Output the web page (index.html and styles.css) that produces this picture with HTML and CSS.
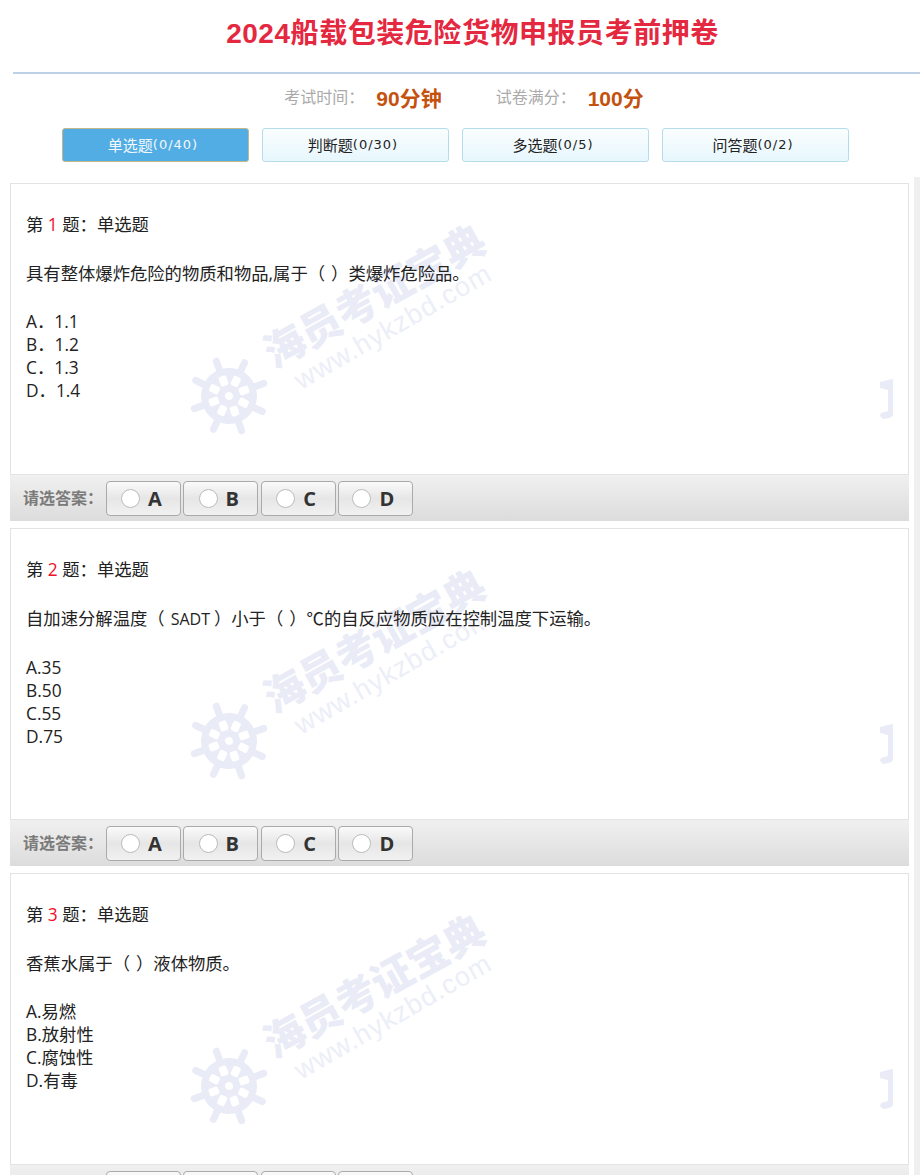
FILE: index.html
```html
<!DOCTYPE html>
<html lang="zh-CN">
<head>
<meta charset="utf-8">
<title>2024船载包装危险货物申报员考前押卷</title>
<link rel="stylesheet" href="styles.css">
</head>
<body>
<header class="head"><h1 class="title">2024船载包装危险货物申报员考前押卷</h1></header>
<div class="info">
  <span class="info-item"><span class="info-label">考试时间：</span><b class="info-value">90分钟</b></span>
  <span class="info-item"><span class="info-label">试卷满分：</span><b class="info-value">100分</b></span>
</div>
<nav class="tabs">
  <a class="tab active">单选题<span class="tab-num">(0/40)</span></a>
  <a class="tab">判断题<span class="tab-num">(0/30)</span></a>
  <a class="tab">多选题<span class="tab-num">(0/5)</span></a>
  <a class="tab">问答题<span class="tab-num">(0/2)</span></a>
</nav>
<div class="main">
  <div class="list">
    <section class="card">
      <svg class="mark" viewBox="0 0 899 338" width="899" height="338" aria-hidden="true">
        <text class="mark-cn" transform="translate(264 186) rotate(-29)">海员考证宝典</text>
        <text class="mark-en" transform="translate(291 207) rotate(-30)">www.hykzbd.com</text>
        <g transform="translate(219 213) rotate(-20)">
          <g class="spokes"><path d="M0-37V37M-37 0H37M-26-26L26 26M-26 26L26-26"/></g>
          <circle class="disc" r="28"/>
          <g class="holes">
            <rect x="-4" y="-21" width="8" height="10" rx="2"/>
            <rect x="-4" y="11" width="8" height="10" rx="2"/>
            <rect x="-21" y="-4" width="10" height="8" rx="2"/>
            <rect x="11" y="-4" width="10" height="8" rx="2"/>
            <rect x="-4" y="-21" width="8" height="10" rx="2" transform="rotate(45)"/>
            <rect x="-4" y="11" width="8" height="10" rx="2" transform="rotate(45)"/>
            <rect x="-21" y="-4" width="10" height="8" rx="2" transform="rotate(45)"/>
            <rect x="11" y="-4" width="10" height="8" rx="2" transform="rotate(45)"/>
            <circle r="4"/>
          </g>
        </g>
        <path class="disc" d="M878 197l5-1v36q-1 3-10 4l-3-3 1-3 7-2v-21l-8-2v-6z"/>
      </svg>
      <div class="body">
        <p class="q-head">第 <span class="num">1</span> 题：单选题</p>
        <p class="q-text">具有整体爆炸危险的物质和物品,属于（ ）类爆炸危险品。</p>
        <p class="opts">A．1.1<br>B．1.2<br>C．1.3<br>D．1.4</p>
      </div>
      <div class="answer">
        <span class="answer-label">请选答案：</span>
        <div class="choices">
          <label class="choice"><i class="radio"></i>A</label>
          <label class="choice"><i class="radio"></i>B</label>
          <label class="choice"><i class="radio"></i>C</label>
          <label class="choice"><i class="radio"></i>D</label>
        </div>
      </div>
    </section>
    <section class="card">
      <svg class="mark" viewBox="0 0 899 338" width="899" height="338" aria-hidden="true">
        <text class="mark-cn" transform="translate(264 186) rotate(-29)">海员考证宝典</text>
        <text class="mark-en" transform="translate(291 207) rotate(-30)">www.hykzbd.com</text>
        <g transform="translate(219 213) rotate(-20)">
          <g class="spokes"><path d="M0-37V37M-37 0H37M-26-26L26 26M-26 26L26-26"/></g>
          <circle class="disc" r="28"/>
          <g class="holes">
            <rect x="-4" y="-21" width="8" height="10" rx="2"/>
            <rect x="-4" y="11" width="8" height="10" rx="2"/>
            <rect x="-21" y="-4" width="10" height="8" rx="2"/>
            <rect x="11" y="-4" width="10" height="8" rx="2"/>
            <rect x="-4" y="-21" width="8" height="10" rx="2" transform="rotate(45)"/>
            <rect x="-4" y="11" width="8" height="10" rx="2" transform="rotate(45)"/>
            <rect x="-21" y="-4" width="10" height="8" rx="2" transform="rotate(45)"/>
            <rect x="11" y="-4" width="10" height="8" rx="2" transform="rotate(45)"/>
            <circle r="4"/>
          </g>
        </g>
        <path class="disc" d="M878 197l5-1v36q-1 3-10 4l-3-3 1-3 7-2v-21l-8-2v-6z"/>
      </svg>
      <div class="body">
        <p class="q-head">第 <span class="num">2</span> 题：单选题</p>
        <p class="q-text">自加速分解温度（<span class="abbr">SADT</span>）小于（ ）℃的自反应物质应在控制温度下运输。</p>
        <p class="opts">A.35<br>B.50<br>C.55<br>D.75</p>
      </div>
      <div class="answer">
        <span class="answer-label">请选答案：</span>
        <div class="choices">
          <label class="choice"><i class="radio"></i>A</label>
          <label class="choice"><i class="radio"></i>B</label>
          <label class="choice"><i class="radio"></i>C</label>
          <label class="choice"><i class="radio"></i>D</label>
        </div>
      </div>
    </section>
    <section class="card">
      <svg class="mark" viewBox="0 0 899 338" width="899" height="338" aria-hidden="true">
        <text class="mark-cn" transform="translate(264 186) rotate(-29)">海员考证宝典</text>
        <text class="mark-en" transform="translate(291 207) rotate(-30)">www.hykzbd.com</text>
        <g transform="translate(219 213) rotate(-20)">
          <g class="spokes"><path d="M0-37V37M-37 0H37M-26-26L26 26M-26 26L26-26"/></g>
          <circle class="disc" r="28"/>
          <g class="holes">
            <rect x="-4" y="-21" width="8" height="10" rx="2"/>
            <rect x="-4" y="11" width="8" height="10" rx="2"/>
            <rect x="-21" y="-4" width="10" height="8" rx="2"/>
            <rect x="11" y="-4" width="10" height="8" rx="2"/>
            <rect x="-4" y="-21" width="8" height="10" rx="2" transform="rotate(45)"/>
            <rect x="-4" y="11" width="8" height="10" rx="2" transform="rotate(45)"/>
            <rect x="-21" y="-4" width="10" height="8" rx="2" transform="rotate(45)"/>
            <rect x="11" y="-4" width="10" height="8" rx="2" transform="rotate(45)"/>
            <circle r="4"/>
          </g>
        </g>
        <path class="disc" d="M878 197l5-1v36q-1 3-10 4l-3-3 1-3 7-2v-21l-8-2v-6z"/>
      </svg>
      <div class="body">
        <p class="q-head">第 <span class="num">3</span> 题：单选题</p>
        <p class="q-text">香蕉水属于（ ）液体物质。</p>
        <p class="opts">A.易燃<br>B.放射性<br>C.腐蚀性<br>D.有毒</p>
      </div>
      <div class="answer">
        <span class="answer-label">请选答案：</span>
        <div class="choices">
          <label class="choice"><i class="radio"></i>A</label>
          <label class="choice"><i class="radio"></i>B</label>
          <label class="choice"><i class="radio"></i>C</label>
          <label class="choice"><i class="radio"></i>D</label>
        </div>
      </div>
    </section>
  </div>
  <div class="track"></div>
</div>
</body>
</html>
```
FILE: styles.css
```css
* { box-sizing: border-box; }
html, body { margin: 0; padding: 0; background: #fff; }
body {
  height: 1175px;
  overflow: hidden;
  font-family: "Open Sans", "Noto Sans CJK SC", sans-serif;
  color: #222;
  text-spacing-trim: space-all;
}
.head {
  height: 74px;
  margin-left: 13px;
  border-bottom: 2px solid #bdd0e8;
  display: flex;
  justify-content: center;
  padding: 14px 0 0 12px;
}
.title {
  margin: 0;
  font-family: "Liberation Sans", "Noto Sans CJK SC", sans-serif;
  font-size: 28px;
  line-height: 40px;
  letter-spacing: 0.55px;
  font-weight: 700;
  color: #e4283f;
}
.info {
  height: 54px;
  display: flex;
  justify-content: center;
  align-items: center;
  gap: 54px;
  margin-left: 8px;
  padding-bottom: 5px;
}
.info-item { display: flex; align-items: center; gap: 12px; }
.info-label {
  font-size: 16px;
  color: #aaa;
  font-family: "Noto Sans CJK SC", sans-serif;
  padding-bottom: 6px;
}
.info-value {
  font-size: 21px;
  line-height: 28px;
  color: #c4520e;
  font-family: "Liberation Sans", "Noto Sans CJK SC", sans-serif;
}
.tabs {
  display: flex;
  gap: 13px;
  padding-left: 62px;
  height: 34px;
}
.tab {
  width: 187px;
  height: 34px;
  border: 1px solid #b5dcec;
  border-radius: 3px;
  background: linear-gradient(#fafdfe, #e7f7fd);
  display: flex;
  align-items: center;
  justify-content: center;
  padding: 0 5px 2px 0;
  font-family: "Noto Sans CJK SC", sans-serif;
  font-size: 15px;
  color: #222;
}
.tab-num {
  font-family: "DejaVu Sans", sans-serif;
  font-size: 13px;
  letter-spacing: 1px;
}
.tab.active {
  background: #52ade4;
  border-color: #c2b78c;
  color: #f2f8fc;
}
.main {
  display: flex;
  margin-top: 15px;
}
.list {
  width: 909px;
  padding: 6px 0 0 10px;
  display: flex;
  flex-direction: column;
  gap: 7px;
}
.track {
  width: 6px;
  margin-left: 5px;
  background: #f0f0f0;
  height: 1000px;
}
.card {
  position: relative;
  width: 899px;
  height: 338px;
  flex: none;
  border: 1px solid #e3e3e3;
  border-bottom: 0;
  display: flex;
  flex-direction: column;
}
.body {
  position: relative;
  flex: 1;
  padding: 29px 15px 0;
  font-size: 17.33px;
  line-height: 23px;
}
.q-head, .q-text, .opts { margin: 0; }
.q-text { margin-top: 26px; word-spacing: 1.5px; }
.abbr { font-size: 16px; padding: 0 4px 0 6px; }
.opts { margin-top: 25px; }
.num { color: #f01028; }
.answer {
  position: relative;
  height: 47px;
  margin: 0 -1px;
  border-top: 1px solid #e4e4e4;
  background: linear-gradient(#f0f0f0, #dcdcdc);
  display: flex;
  align-items: center;
  padding: 0 0 0 13px;
}
.answer-label {
  width: 83px;
  font-size: 16px;
  font-weight: 700;
  color: #7a7a7a;
  font-family: "Noto Sans CJK SC", sans-serif;
  padding-bottom: 2px;
  white-space: nowrap;
}
.choices { display: flex; gap: 2.3px; }
.choice {
  width: 75px;
  height: 35px;
  border: 1px solid #aaa;
  border-radius: 4px;
  background: linear-gradient(#fafafa 0%, #e6e6e6 50%, #f1f1f1 100%);
  display: flex;
  align-items: center;
  justify-content: center;
  gap: 8px;
  padding-right: 4px;
  font-size: 20px;
  font-weight: 700;
  color: #333;
}
.radio {
  width: 19px;
  height: 19px;
  border-radius: 50%;
  border: 1px solid #bbb;
  background: #fff;
}
.mark {
  position: absolute;
  left: -1px;
  top: -1px;
  pointer-events: none;
}
.mark-cn {
  font-family: "Noto Sans CJK SC", sans-serif;
  font-size: 41px;
  font-weight: 900;
  fill: #e9ebf6;
}
.mark-en {
  font-family: "Liberation Sans", sans-serif;
  font-size: 27px;
  letter-spacing: 1px;
  fill: #eceef8;
}
.disc { fill: #e9ebf6; }
.spokes path { stroke: #e9ebf6; stroke-width: 7; fill: none; stroke-linecap: round; }
.holes { fill: #fff; }
```
